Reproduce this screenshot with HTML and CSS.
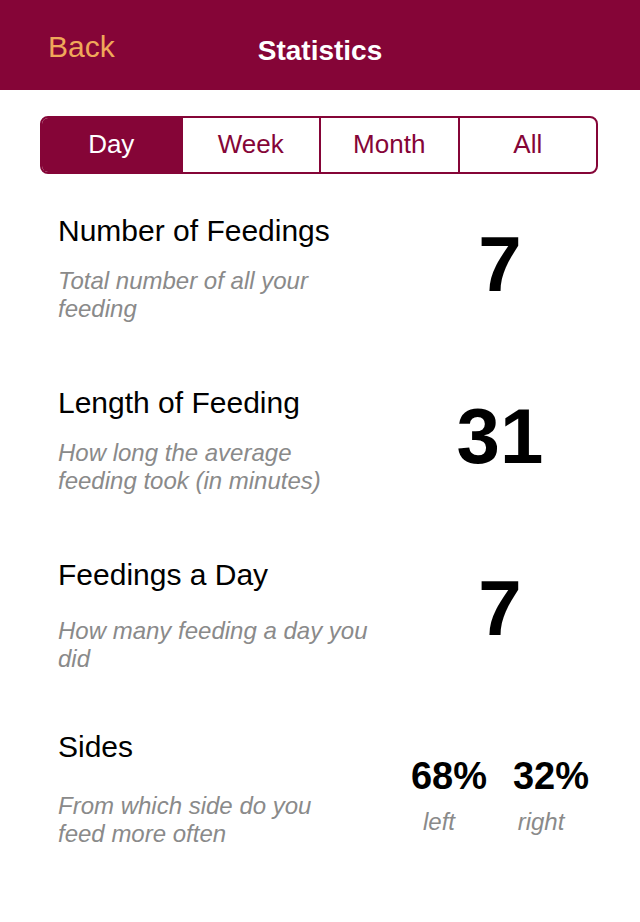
FILE: index.html
```html
<!DOCTYPE html>
<html lang="en">
<head>
<meta charset="utf-8">
<title>Statistics</title>
<link rel="stylesheet" href="styles.css">
</head>
<body>
<header class="navbar">
  <span class="back">Back</span>
  <h1 class="title">Statistics</h1>
</header>
<main class="content">
  <div class="segmented">
    <span class="seg seg-active">Day</span>
    <span class="seg">Week</span>
    <span class="seg">Month</span>
    <span class="seg">All</span>
  </div>

  <section class="row">
    <div class="info">
      <h2 class="row-title">Number of Feedings</h2>
      <p class="row-sub sub-1">Total number of all your<br>feeding</p>
    </div>
    <div class="value"><span class="big">7</span></div>
  </section>

  <section class="row">
    <div class="info">
      <h2 class="row-title">Length of Feeding</h2>
      <p class="row-sub sub-1">How long the average<br>feeding took (in minutes)</p>
    </div>
    <div class="value"><span class="big">31</span></div>
  </section>

  <section class="row">
    <div class="info">
      <h2 class="row-title">Feedings a Day</h2>
      <p class="row-sub sub-3">How many feeding a day you<br>did</p>
    </div>
    <div class="value"><span class="big">7</span></div>
  </section>

  <section class="row">
    <div class="info">
      <h2 class="row-title">Sides</h2>
      <p class="row-sub sub-4">From which side do you<br>feed more often</p>
    </div>
    <div class="value sides">
      <div class="side">
        <span class="pct">68%</span>
        <span class="side-label">left</span>
      </div>
      <div class="side">
        <span class="pct">32%</span>
        <span class="side-label">right</span>
      </div>
    </div>
  </section>
</main>
</body>
</html>
```
FILE: styles.css
```css
* { box-sizing: border-box; }
html, body {
  margin: 0;
  padding: 0;
  background: #ffffff;
  font-family: "Liberation Sans", Arial, Helvetica, sans-serif;
  color: #000;
}
.navbar {
  height: 90px;
  background: #850537;
  display: flex;
  align-items: center;
  justify-content: center;
  position: relative;
}
.back {
  position: absolute;
  left: 48px;
  top: 30px;
  font-size: 30px;
  line-height: 34px;
  color: #f0a85a;
}
.title {
  margin: 12px 0 0 0;
  font-size: 28px;
  font-weight: bold;
  color: #ffffff;
  line-height: 34px;
}
.content {
  padding: 26px 30px 0 40px;
}
.segmented {
  display: grid;
  grid-template-columns: repeat(4, 1fr);
  width: 558px;
  height: 58px;
  border: 2px solid #850537;
  border-radius: 8px;
  overflow: hidden;
}
.seg {
  display: flex;
  align-items: center;
  justify-content: center;
  font-size: 26px;
  color: #850537;
  border-left: 2px solid #850537;
  padding-bottom: 1px;
}
.seg:first-child { border-left: none; }
.seg-active {
  background: #850537;
  color: #ffffff;
}
.row {
  display: flex;
  height: 172px;
  padding-left: 18px;
}
.segmented + .row { margin-top: 40px; }
.info { flex: 1; }
.row-title {
  margin: 0;
  font-size: 30px;
  font-weight: normal;
  line-height: 34px;
}
.row-sub {
  margin: 19px 0 0 0;
  font-size: 24px;
  line-height: 28px;
  font-style: italic;
  color: #8a8a8a;
}
.sub-3 { margin-top: 25px; }
.sub-4 { margin-top: 28px; }
.value {
  width: 220px;
  display: flex;
  justify-content: center;
  align-items: flex-start;
}
.big {
  margin-top: 10px;
  font-size: 78px;
  font-weight: bold;
  line-height: 80px;
}
.sides {
  gap: 2px;
  padding-top: 28px;
}
.side {
  width: 100px;
  display: flex;
  flex-direction: column;
  align-items: center;
}
.pct {
  font-size: 38px;
  font-weight: bold;
  line-height: 36px;
}
.side-label {
  margin-top: 14px;
  margin-right: 20px;
  font-size: 24px;
  line-height: 28px;
  font-style: italic;
  color: #8a8a8a;
}
```
